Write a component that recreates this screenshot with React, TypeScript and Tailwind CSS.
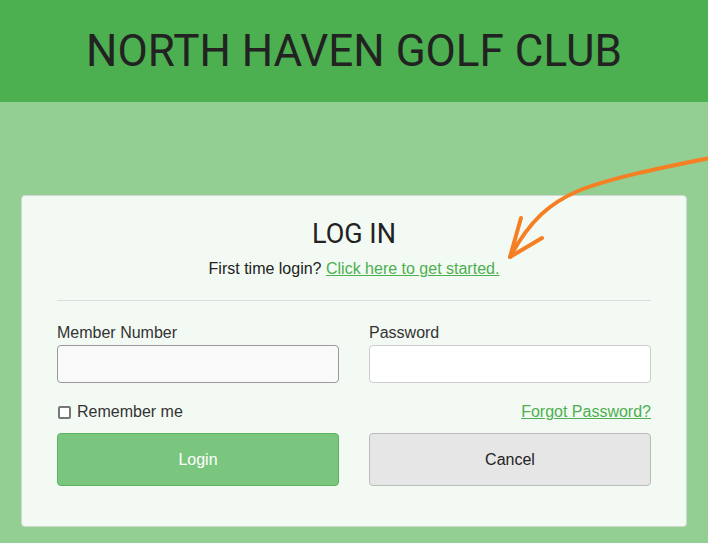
import { useState } from "react";

export default function App() {
  const [remember, setRemember] = useState(false);
  return (
    <div className="relative min-h-[543px] bg-[#93cf93] font-['Liberation_Sans',Arial,sans-serif] overflow-hidden">
      <header className="h-[102px] bg-[#4caf50] flex items-center justify-center">
        <h1 className="font-['Roboto',sans-serif] text-[44px] leading-none text-[#222]">NORTH HAVEN GOLF CLUB</h1>
      </header>

      <div className="px-[21px] pt-[93px]">
        <div className="bg-[#f3faf3] border border-[#d0d8d0] rounded-[4px] px-[35px] pt-[20px] pb-[40px]">
          <h2 className="font-['Roboto',sans-serif] text-[27px] leading-[36px] text-[#222] text-center">LOG IN</h2>
          <p className="text-[16px] text-[#222] text-center mt-[8px] leading-[18px]">
            First time login?{" "}
            <a href="#" className="text-[#4caf50] underline">Click here to get started.</a>
          </p>
          <hr className="mt-[22px] border-t border-[#dcdcdc]" />

          <div className="grid grid-cols-2 gap-x-[30px] mt-[23px]">
            <div>
              <label className="block text-[16px] text-[#333] leading-[18px] mb-[3px]">Member Number</label>
              <input autoFocus className="w-full h-[38px] bg-[#f9f9f9] border border-[#999] rounded-[4px] px-3 outline-none caret-[#222]" />
            </div>
            <div>
              <label className="block text-[16px] text-[#333] leading-[18px] mb-[3px]">Password</label>
              <input type="password" className="w-full h-[38px] bg-white border border-[#ccc] rounded-[4px] px-3 outline-none" />
            </div>

            <label className="flex items-center gap-[6px] mt-[20px] text-[16px] text-[#333] leading-[18px]">
              <span
                onClick={() => setRemember(!remember)}
                className="w-[13px] h-[13px] border-2 border-[#777] rounded-[2px] bg-white ml-[1px]"
              />
              Remember me
            </label>
            <div className="mt-[20px] text-right text-[16px] leading-[18px]">
              <a href="#" className="text-[#4caf50] underline">Forgot Password?</a>
            </div>

            <button className="mt-[12px] h-[53px] rounded-[4px] bg-[#7bc67f] border border-[#5cb35f] text-white text-[16px]">Login</button>
            <button className="mt-[12px] h-[53px] rounded-[4px] bg-[#e6e6e6] border border-[#bbb] text-[#222] text-[16px]">Cancel</button>
          </div>
        </div>
      </div>

      <svg className="absolute left-0 top-0 pointer-events-none" width="708" height="543" viewBox="0 0 708 543" fill="none">
        <path d="M710 158 C660 168 610 178 578 191 C550 203 530 220 510 257" stroke="#f57f22" strokeWidth="4" strokeLinecap="round" />
        <path d="M521 218 L510 257 L542 238" stroke="#f57f22" strokeWidth="4" strokeLinecap="round" strokeLinejoin="round" />
      </svg>
    </div>
  );
}
